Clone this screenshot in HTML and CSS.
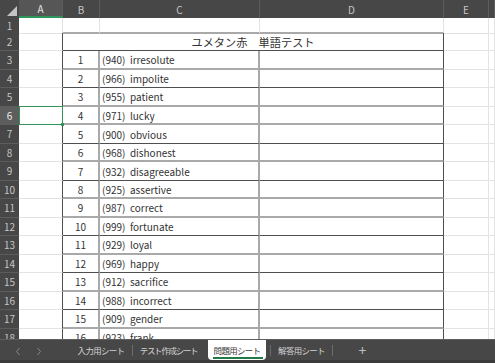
FILE: index.html
```html
<!DOCTYPE html>
<html lang="ja">
<head>
  <meta charset="UTF-8" />
  <meta name="viewport" content="width=device-width, initial-scale=1.0"/>
  <title>単語テスト</title>
  <link rel="stylesheet" href="styles.css">
</head>
<body>
  <div class="sheet">
    <!-- column headers -->
    <div class="row head">
      <div class="corner">
        <svg width="19" height="18" viewBox="0 0 19 18"><polygon points="17,6 17,16 7,16" fill="#c4c4c4"/></svg>
      </div>
      <div class="ch active">A</div>
      <div class="ch">B</div>
      <div class="ch">C</div>
      <div class="ch">D</div>
      <div class="ch">E</div>
      <div class="ch"></div>
    </div>

    <div class="row first lg">
      <div class="rh">1</div>
      <div class="cell"></div>
      <div class="cell t"></div>
      <div class="cell t"></div>
      <div class="cell t"></div>
      <div class="cell"></div>
      <div class="cell"></div>
    </div>

    <div class="row tr ld">
      <div class="rh">2</div>
      <div class="cell ca"></div>
      <div class="cell t title">ユメタン赤　単語テスト</div>
      <div class="cell"></div>
      <div class="cell"></div>
    </div>

    <div class="row tr lg">
      <div class="rh">3</div>
      <div class="cell ca"></div>
      <div class="cell t cb">1</div>
      <div class="cell t cc">(940)  irresolute</div>
      <div class="cell t cd"></div>
      <div class="cell"></div>
      <div class="cell"></div>
    </div>

    <div class="row tr ld">
      <div class="rh">4</div>
      <div class="cell ca"></div>
      <div class="cell t cb">2</div>
      <div class="cell t cc">(966)  impolite</div>
      <div class="cell t cd"></div>
      <div class="cell"></div>
      <div class="cell"></div>
    </div>

    <div class="row tr lg">
      <div class="rh">5</div>
      <div class="cell ca"></div>
      <div class="cell t cb">3</div>
      <div class="cell t cc">(955)  patient</div>
      <div class="cell t cd"></div>
      <div class="cell"></div>
      <div class="cell"></div>
    </div>

    <div class="row tr lg">
      <div class="rh on">6</div>
      <div class="cell ca selected"></div>
      <div class="cell t cb">4</div>
      <div class="cell t cc">(971)  lucky</div>
      <div class="cell t cd"></div>
      <div class="cell"></div>
      <div class="cell"></div>
    </div>

    <div class="row tr ld">
      <div class="rh">7</div>
      <div class="cell ca"></div>
      <div class="cell t cb">5</div>
      <div class="cell t cc">(900)  obvious</div>
      <div class="cell t cd"></div>
      <div class="cell"></div>
      <div class="cell"></div>
    </div>

    <div class="row tr lg">
      <div class="rh">8</div>
      <div class="cell ca"></div>
      <div class="cell t cb">6</div>
      <div class="cell t cc">(968)  dishonest</div>
      <div class="cell t cd"></div>
      <div class="cell"></div>
      <div class="cell"></div>
    </div>

    <div class="row tr ld">
      <div class="rh">9</div>
      <div class="cell ca"></div>
      <div class="cell t cb">7</div>
      <div class="cell t cc">(932)  disagreeable</div>
      <div class="cell t cd"></div>
      <div class="cell"></div>
      <div class="cell"></div>
    </div>

    <div class="row tr lg">
      <div class="rh">10</div>
      <div class="cell ca"></div>
      <div class="cell t cb">8</div>
      <div class="cell t cc">(925)  assertive</div>
      <div class="cell t cd"></div>
      <div class="cell"></div>
      <div class="cell"></div>
    </div>

    <div class="row tr lg">
      <div class="rh">11</div>
      <div class="cell ca"></div>
      <div class="cell t cb">9</div>
      <div class="cell t cc">(987)  correct</div>
      <div class="cell t cd"></div>
      <div class="cell"></div>
      <div class="cell"></div>
    </div>

    <div class="row tr ld">
      <div class="rh">12</div>
      <div class="cell ca"></div>
      <div class="cell t cb">10</div>
      <div class="cell t cc">(999)  fortunate</div>
      <div class="cell t cd"></div>
      <div class="cell"></div>
      <div class="cell"></div>
    </div>

    <div class="row tr lg">
      <div class="rh">13</div>
      <div class="cell ca"></div>
      <div class="cell t cb">11</div>
      <div class="cell t cc">(929)  loyal</div>
      <div class="cell t cd"></div>
      <div class="cell"></div>
      <div class="cell"></div>
    </div>

    <div class="row tr ld">
      <div class="rh">14</div>
      <div class="cell ca"></div>
      <div class="cell t cb">12</div>
      <div class="cell t cc">(969)  happy</div>
      <div class="cell t cd"></div>
      <div class="cell"></div>
      <div class="cell"></div>
    </div>

    <div class="row tr lg">
      <div class="rh">15</div>
      <div class="cell ca"></div>
      <div class="cell t cb">13</div>
      <div class="cell t cc">(912)  sacrifice</div>
      <div class="cell t cd"></div>
      <div class="cell"></div>
      <div class="cell"></div>
    </div>

    <div class="row tr ld">
      <div class="rh">16</div>
      <div class="cell ca"></div>
      <div class="cell t cb">14</div>
      <div class="cell t cc">(988)  incorrect</div>
      <div class="cell t cd"></div>
      <div class="cell"></div>
      <div class="cell"></div>
    </div>

    <div class="row tr lg">
      <div class="rh">17</div>
      <div class="cell ca"></div>
      <div class="cell t cb">15</div>
      <div class="cell t cc">(909)  gender</div>
      <div class="cell t cd"></div>
      <div class="cell"></div>
      <div class="cell"></div>
    </div>

    <div class="row tr ld">
      <div class="rh">18</div>
      <div class="cell ca"></div>
      <div class="cell t cb">16</div>
      <div class="cell t cc">(923)  frank</div>
      <div class="cell t cd"></div>
      <div class="cell"></div>
      <div class="cell"></div>
    </div>
  </div>

  <!-- sheet tabs -->
  <div class="tabbar">
    <div class="nav">
      <svg width="6" height="9" viewBox="0 0 6 9"><path d="M4.5 1 L1.5 4.5 L4.5 8" fill="none" stroke="#8a8a8a" stroke-width="1"/></svg>
      <svg width="6" height="9" viewBox="0 0 6 9"><path d="M1.5 1 L4.5 4.5 L1.5 8" fill="none" stroke="#8a8a8a" stroke-width="1"/></svg>
    </div>
    <div class="tab t1">入力用シート</div>
    <div class="sep"></div>
    <div class="tab t2">テスト作成シート</div>
    <div class="tab current">問題用シート</div>
    <div class="sep"></div>
    <div class="tab t4">解答用シート</div>
    <div class="sep"></div>
    <div class="add">+</div>
  </div>
</body>
</html>
```

FILE: styles.css
```css
:root {
  --head-bg: #474747;
  --head-line: #5c5c5c;
  --head-text: #c6c6c6;
  --grid: #e3e3e3;
  --dark-line: #4f4f4f;
  --gray-line: #a9a9a9;
  --green: #2f9459;
}
html, body {
  margin: 0;
  padding: 0;
  height: 363px;
  overflow: hidden;
  background: #fff;
}
body {
  font-family: "Noto Sans CJK JP", "Noto Sans", sans-serif;
  color: #333;
  display: flex;
  flex-direction: column;
}
.sheet {
  height: 341px;
  overflow: hidden;
  display: flex;
  flex-direction: column;
}
.row {
  flex: none;
  height: 18.5px;
  display: grid;
  grid-template-columns: 19px 44px 37px 160px 184px 45px 1fr;
}
.row.head {
  height: 18px;
  background: var(--head-bg);
}
.row.first {
  height: 14.5px;
}
.corner {
  background: var(--head-bg);
}
.corner svg {
  display: block;
}
.ch {
  box-sizing: border-box;
  border-right: 1px solid var(--head-line);
  color: var(--head-text);
  font-size: 10px;
  display: flex;
  align-items: center;
  justify-content: center;
}
.ch.active {
  background: #565656;
  color: #e4e4e4;
  border-bottom: 2px solid var(--green);
}
.rh {
  box-sizing: border-box;
  background: var(--head-bg);
  border-bottom: 1px solid var(--head-line);
  color: var(--head-text);
  font-size: 10px;
  display: flex;
  align-items: center;
  justify-content: center;
}
.rh.on {
  background: #5d5d5d;
  color: #eee;
}
.cell {
  box-sizing: border-box;
  border-right: 1px solid var(--grid);
  border-bottom: 1px solid var(--grid);
  font-size: 10px;
  display: flex;
  align-items: center;
  white-space: pre;
  overflow: hidden;
  padding: 1px 0 0 2px;
  position: relative;
}
/* table borders */
.lg .t {
  border-bottom: 2px solid var(--gray-line);
}
.ld .t {
  border-bottom: 1px solid var(--dark-line);
}
.tr .ca {
  border-right-color: var(--dark-line);
}
.tr .cb,
.tr .cc {
  border-right: 2px solid var(--gray-line);
}
.tr .cd {
  border-right-color: var(--dark-line);
}
.cb {
  justify-content: center;
  padding-left: 0;
}
.title {
  grid-column: span 3;
  justify-content: center;
  border-right-color: var(--dark-line);
  font-size: 11.2px;
  padding-left: 0;
}
.selected {
  overflow: visible;
  z-index: 1;
}
.selected::before {
  content: "";
  position: absolute;
  left: 0;
  top: -1px;
  right: -1px;
  bottom: -1px;
  border: 1px solid var(--green);
}
.selected::after {
  content: "";
  position: absolute;
  right: -2px;
  bottom: -2px;
  width: 3px;
  height: 3px;
  background: var(--green);
}
/* sheet tab bar */
.tabbar {
  flex: 1;
  box-sizing: border-box;
  border-top: 1px solid #5e5e5e;
  background: var(--head-bg);
  box-shadow: inset 0 -3px 0 #3b3b3b;
  display: flex;
  align-items: stretch;
  font-size: 8.5px;
  letter-spacing: -0.7px;
  color: #d2d2d2;
}
.nav {
  width: 70px;
  display: flex;
  align-items: center;
  gap: 15px;
  padding-left: 15px;
  box-sizing: border-box;
}
.nav svg {
  display: block;
}
.tab {
  display: flex;
  align-items: center;
  justify-content: center;
  white-space: nowrap;
  padding-bottom: 3px;
}
.t1 {
  width: 62px;
}
.t2 {
  width: 71px;
  letter-spacing: -1.3px;
}
.t4 {
  width: 61px;
}
.tab.current {
  width: 58px;
  margin-left: 4px;
  background: #fff;
  color: #3a3a3a;
  border-radius: 0 0 4px 4px;
  position: relative;
  margin-bottom: 3px;
  padding-bottom: 0;
}
.tab.current::after {
  content: "";
  position: absolute;
  left: 5px;
  right: 3px;
  bottom: 1px;
  height: 2px;
  background: #1f7a48;
}
.sep {
  width: 1px;
  background: #6c6c6c;
  margin: 5px 0 7px 0;
}
.current + .sep {
  margin-left: 4px;
}
.add {
  width: 58px;
  display: flex;
  align-items: center;
  justify-content: center;
  font-size: 14px;
  color: #bdbdbd;
  padding-bottom: 3px;
}
```
